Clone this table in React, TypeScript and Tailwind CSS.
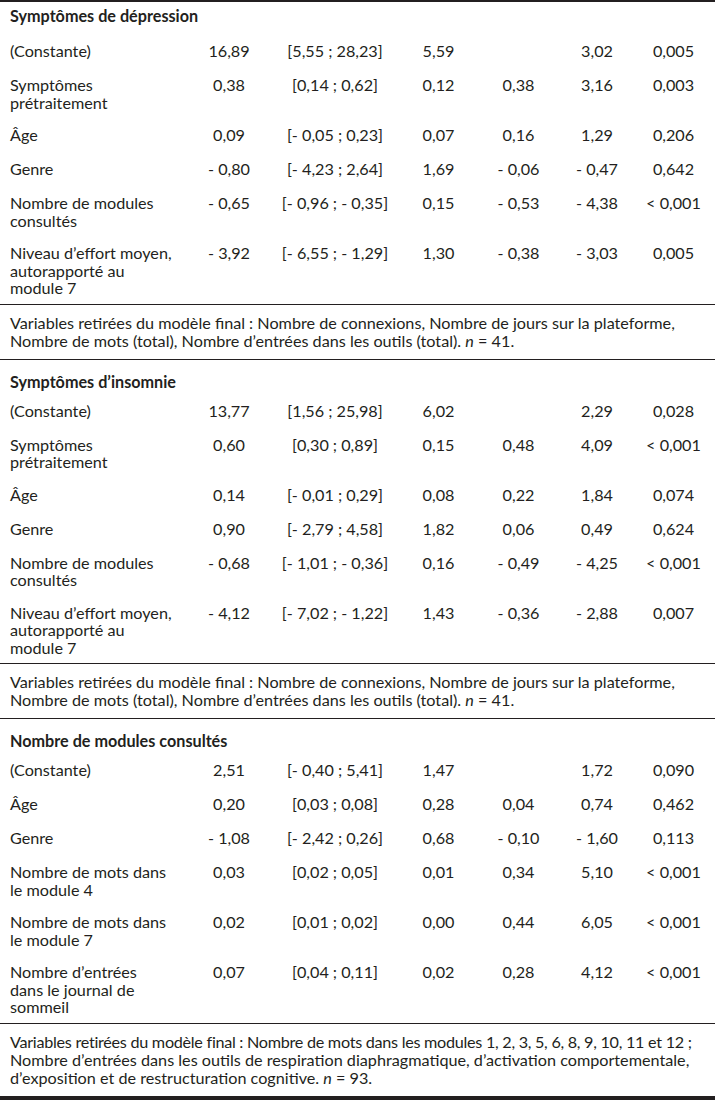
import type { ReactNode } from "react";

interface Row {
  label: string[];
  b: string;
  ci: string;
  se: string;
  beta: string;
  t: string;
  p: string;
}

interface Section {
  title: string;
  rows: Row[];
  note: ReactNode[];
}

const nb = "\u202F";

const sections: Section[] = [
  {
    title: "Symptômes de dépression",
    rows: [
      { label: ["(Constante)"], b: "16,89", ci: `[5,55${nb}; 28,23]`, se: "5,59", beta: "", t: "3,02", p: "0,005" },
      { label: ["Symptômes", "prétraitement"], b: "0,38", ci: `[0,14${nb}; 0,62]`, se: "0,12", beta: "0,38", t: "3,16", p: "0,003" },
      { label: ["Âge"], b: "0,09", ci: `[- 0,05${nb}; 0,23]`, se: "0,07", beta: "0,16", t: "1,29", p: "0,206" },
      { label: ["Genre"], b: "- 0,80", ci: `[- 4,23${nb}; 2,64]`, se: "1,69", beta: "- 0,06", t: "- 0,47", p: "0,642" },
      { label: ["Nombre de modules", "consultés"], b: "- 0,65", ci: `[- 0,96${nb}; - 0,35]`, se: "0,15", beta: "- 0,53", t: "- 4,38", p: "< 0,001" },
      { label: ["Niveau d’effort moyen,", "autorapporté au", "module 7"], b: "- 3,92", ci: `[- 6,55${nb}; - 1,29]`, se: "1,30", beta: "- 0,38", t: "- 3,03", p: "0,005" },
    ],
    note: [
      `Variables retirées du modèle final${nb}: Nombre de connexions, Nombre de jours sur la plateforme,`,
      <>Nombre de mots (total), Nombre d’entrées dans les outils (total). <i>n</i> = 41.</>,
    ],
  },
  {
    title: "Symptômes d’insomnie",
    rows: [
      { label: ["(Constante)"], b: "13,77", ci: `[1,56${nb}; 25,98]`, se: "6,02", beta: "", t: "2,29", p: "0,028" },
      { label: ["Symptômes", "prétraitement"], b: "0,60", ci: `[0,30${nb}; 0,89]`, se: "0,15", beta: "0,48", t: "4,09", p: "< 0,001" },
      { label: ["Âge"], b: "0,14", ci: `[- 0,01${nb}; 0,29]`, se: "0,08", beta: "0,22", t: "1,84", p: "0,074" },
      { label: ["Genre"], b: "0,90", ci: `[- 2,79${nb}; 4,58]`, se: "1,82", beta: "0,06", t: "0,49", p: "0,624" },
      { label: ["Nombre de modules", "consultés"], b: "- 0,68", ci: `[- 1,01${nb}; - 0,36]`, se: "0,16", beta: "- 0,49", t: "- 4,25", p: "< 0,001" },
      { label: ["Niveau d’effort moyen,", "autorapporté au", "module 7"], b: "- 4,12", ci: `[- 7,02${nb}; - 1,22]`, se: "1,43", beta: "- 0,36", t: "- 2,88", p: "0,007" },
    ],
    note: [
      `Variables retirées du modèle final${nb}: Nombre de connexions, Nombre de jours sur la plateforme,`,
      <>Nombre de mots (total), Nombre d’entrées dans les outils (total). <i>n</i> = 41.</>,
    ],
  },
  {
    title: "Nombre de modules consultés",
    rows: [
      { label: ["(Constante)"], b: "2,51", ci: `[- 0,40${nb}; 5,41]`, se: "1,47", beta: "", t: "1,72", p: "0,090" },
      { label: ["Âge"], b: "0,20", ci: `[0,03${nb}; 0,08]`, se: "0,28", beta: "0,04", t: "0,74", p: "0,462" },
      { label: ["Genre"], b: "- 1,08", ci: `[- 2,42${nb}; 0,26]`, se: "0,68", beta: "- 0,10", t: "- 1,60", p: "0,113" },
      { label: ["Nombre de mots dans", "le module 4"], b: "0,03", ci: `[0,02${nb}; 0,05]`, se: "0,01", beta: "0,34", t: "5,10", p: "< 0,001" },
      { label: ["Nombre de mots dans", "le module 7"], b: "0,02", ci: `[0,01${nb}; 0,02]`, se: "0,00", beta: "0,44", t: "6,05", p: "< 0,001" },
      { label: ["Nombre d’entrées", "dans le journal de", "sommeil"], b: "0,07", ci: `[0,04${nb}; 0,11]`, se: "0,02", beta: "0,28", t: "4,12", p: "< 0,001" },
    ],
    note: [
      <span className="tracking-[-0.28px]">
        Variables retirées du modèle final{nb}: Nombre de mots dans les modules 1, 2, 3, 5, 6, 8, 9, 10, 11 et 12{nb};
      </span>,
      "Nombre d’entrées dans les outils de respiration diaphragmatique, d’activation comportementale,",
      <>d’exposition et de restructuration cognitive. <i>n</i> = 93.</>,
    ],
  },
];

function DataRow({ row }: { row: Row }) {
  const multi = row.label.length > 1;
  return (
    <div
      className={`grid grid-cols-[190px_78px_134px_73px_87px_70px_83px] items-start leading-[17.5px] pt-[8px] ${
        multi ? "pb-[7px]" : "pb-[8.5px]"
      }`}
    >
      <div className="pl-[10px]">
        {row.label.map((l, i) => (
          <div key={i}>{l}</div>
        ))}
      </div>
      <div className="text-center whitespace-nowrap">{row.b}</div>
      <div className="text-center whitespace-nowrap">{row.ci}</div>
      <div className="text-center whitespace-nowrap">{row.se}</div>
      <div className="text-center whitespace-nowrap">{row.beta}</div>
      <div className="text-center whitespace-nowrap">{row.t}</div>
      <div className="text-center whitespace-nowrap">{row.p}</div>
    </div>
  );
}

export default function App() {
  return (
    <div className="w-[715px] min-h-[1101px] bg-white text-[#231f20] font-['Lato',sans-serif] text-[16.2px]">
      <div className="border-t-2 border-[#231f20]">
        {sections.map((s, si) => {
          const last = si === sections.length - 1;
          return (
            <div key={s.title}>
              <div
                className={`pl-[10px] font-bold leading-[17.5px] ${
                  si === 0 ? "pt-[5px] pb-[9.5px]" : "pt-[13px] pb-[3.5px]"
                }`}
              >
                {s.title}
              </div>
              {s.rows.map((r, ri) => (
                <DataRow key={ri} row={r} />
              ))}
              <div
                className={`border-t border-[#231f20] pl-[10px] pt-[9px] pb-[9px] leading-[18px] ${
                  last ? "border-b-4" : "border-b"
                }`}
              >
                {s.note.map((n, ni) => (
                  <div key={ni} className="whitespace-nowrap">
                    {n}
                  </div>
                ))}
              </div>
            </div>
          );
        })}
      </div>
    </div>
  );
}
